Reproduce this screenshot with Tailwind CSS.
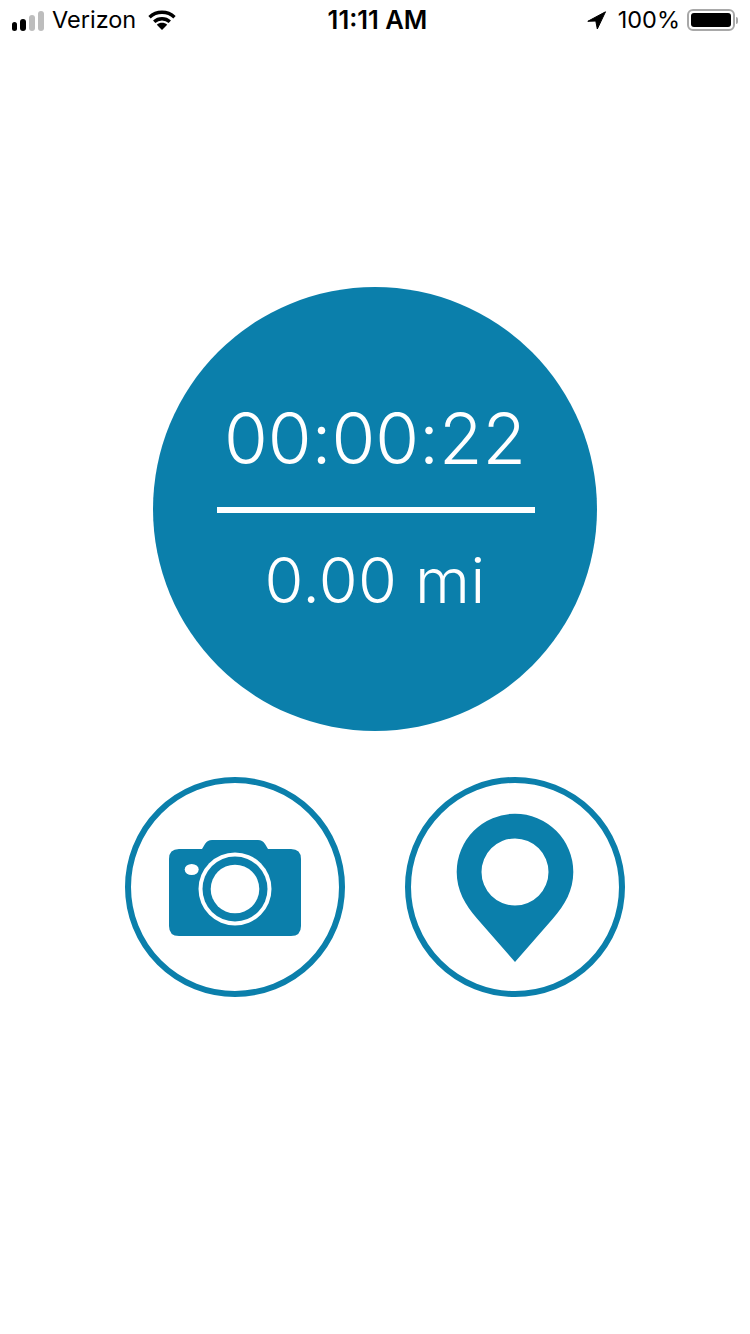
<!DOCTYPE html>
<html lang="en">
<head>
    <meta charset="UTF-8">
    <meta name="viewport" content="width=device-width, initial-scale=1.0">
    <title>Tracker</title>
    <script src="https://cdn.jsdelivr.net/npm/@tailwindcss/browser@4"></script>
</head>
<body class="bg-white font-['Inter',sans-serif]">
    <div class="w-[750px] h-[1334px] overflow-hidden">
        <!-- Status bar -->
        <div class="h-[40px] grid grid-cols-[1fr_auto_1fr] items-center text-black text-[23.500px] leading-none">
            <div class="flex items-center pl-[12px]">
                <div class="flex items-end gap-[3px] h-[20px] mt-[1px]">
                    <div class="w-[5px] h-[9px] rounded-[2.5px] bg-black"></div>
                    <div class="w-[6px] h-[12px] rounded-[3px] bg-black"></div>
                    <div class="w-[6px] h-[16px] rounded-[3px] bg-[#bdbdbd]"></div>
                    <div class="w-[6px] h-[20px] rounded-[3px] bg-[#bdbdbd]"></div>
                </div>
                <span class="ml-[8px]">Verizon</span>
                <svg class="ml-[12px]" width="28" height="20" viewBox="0 0 28 20" fill="none" stroke="#000" stroke-width="3.4">
                    <path d="M1.5 7.2C8.5 0.6 19.5 0.6 26.5 7.2"/>
                    <path d="M6.2 11.8C10.6 7.8 17.4 7.8 21.8 11.8"/>
                    <path d="M14 20L8.8 14.8C11.8 12.2 16.2 12.2 19.2 14.8Z" fill="#000" stroke="none"/>
                </svg>
            </div>
            <div class="font-semibold text-[25.500px] pl-[5px]">11:11 AM</div>
            <div class="flex items-center justify-end pr-[12px]">
                <svg width="20" height="19" viewBox="0 0 20 19" fill="#000" stroke="#000" stroke-width="1" stroke-linejoin="round">
                    <path d="M18.500 0.800L10.300 18L8.800 10L0.800 10.300Z"/>
                </svg>
                <span class="ml-[11px]">100%</span>
                <div class="ml-[7px] flex items-center">
                    <div class="w-[48px] h-[22px] rounded-[6px] border-2 border-[#a8a8a8] p-[2px]">
                        <div class="w-full h-full rounded-[3px] bg-black"></div>
                    </div>
                    <div class="w-[2px] h-[7px] ml-[1px] rounded-r-[2px] bg-[#a8a8a8]"></div>
                </div>
            </div>
        </div>

        <main class="flex flex-col items-center pt-[247px]">
            <!-- Timer -->
            <div class="w-[444px] h-[444px] rounded-full bg-[#0b7fab] text-white flex flex-col items-center">
                <div class="h-[220px] flex items-end pb-[33px] text-[71px] leading-none tracking-[-0.1px] font-[350]">00:00:22</div>
                <div class="w-[318px] h-[6px] ml-[2px] bg-white shrink-0"></div>
                <div class="pt-[36px] text-[63px] leading-none tracking-[0.3px] font-[350]">0.00 mi</div>
            </div>

            <!-- Actions -->
            <div class="flex gap-[60px] mt-[46px]">
                <button class="w-[220px] h-[220px] rounded-full border-[6px] border-[#0b7fab] bg-white relative">
                    <svg class="absolute -top-[6px] -left-[6px]" width="220" height="220" viewBox="0 0 220 220">
                        <path fill="#0b7fab" d="M54 72H77L80 67Q82.500 63 87 63H133Q137.500 63 140 67L143 72H166Q176 72 176 82V149Q176 159 166 159H54Q44 159 44 149V82Q44 72 54 72Z"/>
                        <circle cx="110" cy="112" r="36.500" fill="#fff"/>
                        <circle cx="110" cy="112" r="32.500" fill="#0b7fab"/>
                        <circle cx="110" cy="112" r="24.300" fill="#fff"/>
                        <ellipse cx="66.700" cy="92.500" rx="7" ry="5.500" fill="#fff"/>
                    </svg>
                </button>
                <button class="w-[220px] h-[220px] rounded-full border-[6px] border-[#0b7fab] bg-white relative">
                    <svg class="absolute -top-[6px] -left-[6px]" width="220" height="220" viewBox="0 0 220 220">
                        <path fill="#0b7fab" fill-rule="evenodd" d="M110 185L72 141.500C60 128 51.700 113 51.700 95A58.300 58.300 0 0 1 168.300 95C168.300 113 160 128 148 141.500ZM110 61.500A33.500 33.500 0 1 0 110 128.500A33.500 33.500 0 1 0 110 61.500Z"/>
                    </svg>
                </button>
            </div>
        </main>
    </div>
</body>
</html>
